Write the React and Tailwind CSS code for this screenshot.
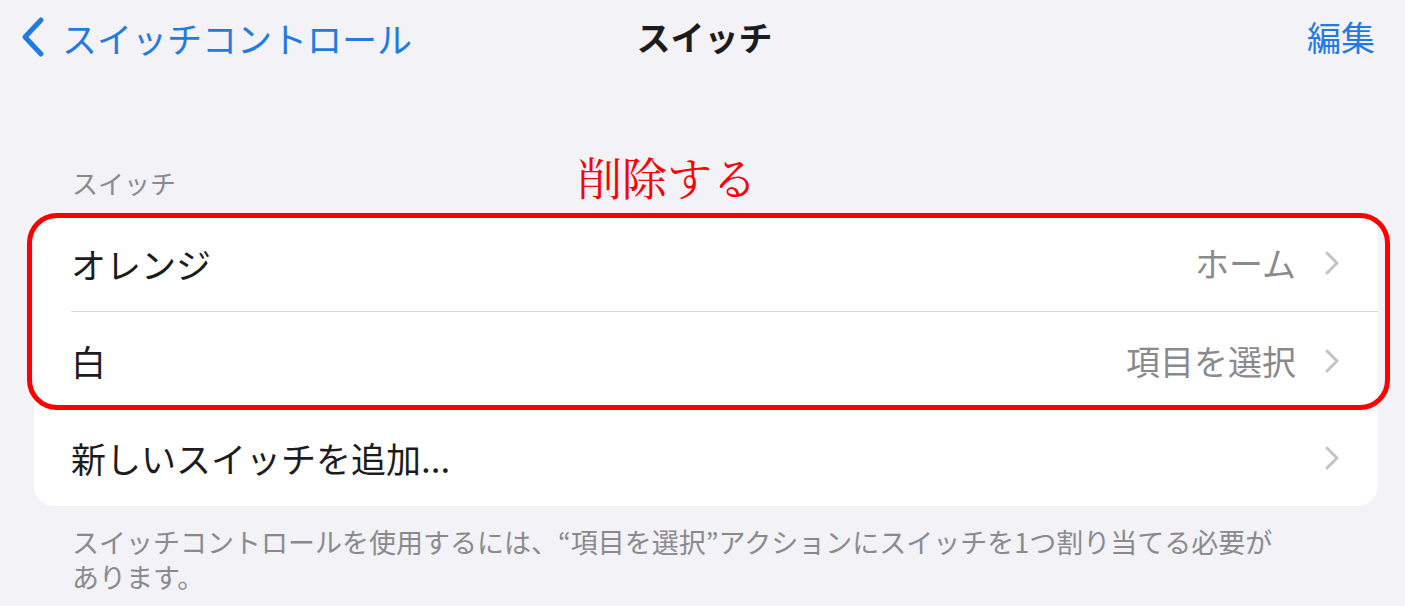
export default function App() {
  const rows = [
    { label: 'オレンジ', value: 'ホーム' },
    { label: '白', value: '項目を選択' },
    { label: '新しいスイッチを追加...', value: '' }
  ];

  return (
    <div
      className="w-[1405px] h-[606px] overflow-hidden bg-[#f2f2f7] text-[#1c1c1e]"
      style={{ fontFamily: '"Noto Sans CJK JP", "Noto Sans", sans-serif' }}
    >
      {/* Navigation bar */}
      <div className="grid grid-cols-3 items-center h-[74px] pl-[20px] pr-[30px]">
        <div className="flex items-center gap-[16px] text-[#1f7ae6]">
          <svg width="26" height="42" viewBox="0 0 26 42" fill="none">
            <path d="M21 4 L5 21 L21 38" stroke="currentColor" strokeWidth="5" strokeLinecap="round" strokeLinejoin="round" />
          </svg>
          <span className="text-[35px] leading-none whitespace-nowrap">スイッチコントロール</span>
        </div>
        <div className="text-center pl-[14px] text-[34px] font-bold leading-none">スイッチ</div>
        <div className="text-right text-[34px] leading-none text-[#1f7ae6]">編集</div>
      </div>

      {/* Section header */}
      <div className="relative mt-[93px] mb-[16px] pl-[72px]">
        <span className="text-[26px] leading-[31px] text-[#8a8a8e]">スイッチ</span>
        <span
          className="absolute left-[577px] -top-[13px] text-[45px] leading-none text-[#ff0000]"
          style={{ fontFamily: '"Noto Serif CJK JP", "Liberation Serif", serif' }}
        >
          削除する
        </span>
      </div>

      {/* Card */}
      <div className="relative ml-[34px] mr-[27px] bg-white rounded-[20px]">
        {rows.map((row, i) => (
          <div key={row.label} className="flex items-center h-[97px] pl-[37px]">
            <div
              className={`flex-1 h-full flex items-center justify-between pr-[38px] ${
                i < 1 ? 'border-b border-[#d8d8dc]' : ''
              }`}
            >
              <span className="text-[35px] leading-none">{row.label}</span>
              <div className="flex items-center gap-[28px]">
                {row.value && (
                  <span className="text-[34px] leading-none text-[#8a8a8e]">{row.value}</span>
                )}
                <svg width="16" height="26" viewBox="0 0 16 26" fill="none">
                  <path d="M3 3 L13 13 L3 23" stroke="#c4c4c7" strokeWidth="3" strokeLinecap="round" strokeLinejoin="round" />
                </svg>
              </div>
            </div>
          </div>
        ))}

        {/* Red annotation frame */}
        <div className="absolute -left-[7px] -top-[2px] w-[1363px] h-[197px] border-[5px] border-[#ff0000] rounded-[30px] pointer-events-none" />
      </div>

      {/* Footer */}
      <p className="mt-[18px] pl-[72px] text-[27px] leading-[35px] text-[#8a8a8e]">
        スイッチコントロールを使用するには、“項目を選択”アクションにスイッチを1つ割り当てる必要が
        <br />
        あります。
      </p>
    </div>
  );
}
